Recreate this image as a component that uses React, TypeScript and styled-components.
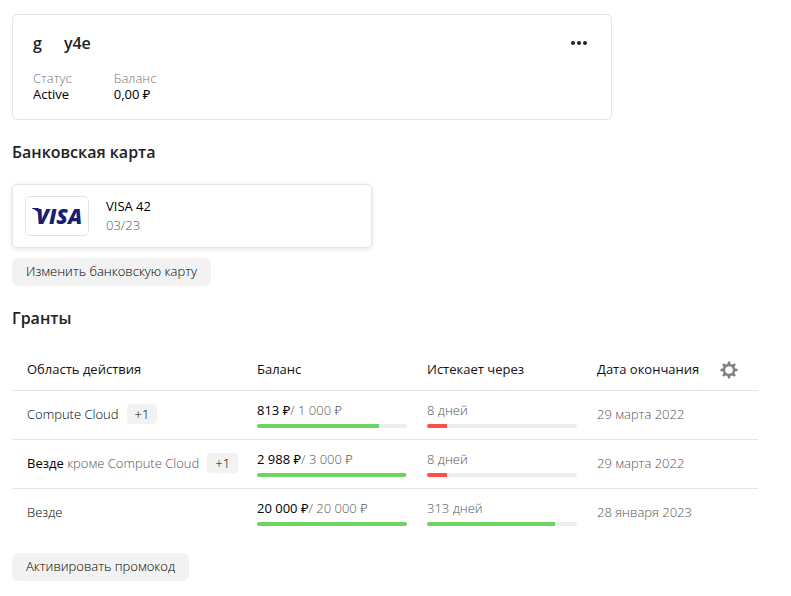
import React from 'react';
import styled, { createGlobalStyle } from 'styled-components';

const GlobalStyle = createGlobalStyle`
  * { box-sizing: border-box; }
  body {
    margin: 0;
    background: #fff;
    color: #000;
    font-family: "Open Sans", "Noto Sans", sans-serif;
    font-size: 13px;
    line-height: 16px;
    font-weight: 300;
  }
`;

const Page = styled.main`
  display: flex;
  flex-direction: column;
  align-items: flex-start;
  padding: 14px 12px;
`;

const AccountCard = styled.section`
  width: 100%;
  max-width: 600px;
  padding: 17px 20px;
  border: 1px solid #e5e5e5;
  border-radius: 5px;
`;

const AccountHeader = styled.header`
  display: flex;
  align-items: center;
  justify-content: space-between;
`;

const AccountName = styled.h1`
  display: flex;
  gap: 22px;
  margin: 0;
  font-size: 16px;
  line-height: 22px;
  font-weight: 600;
  color: #222;
`;

const IconButton = styled.button`
  display: flex;
  align-items: center;
  justify-content: center;
  width: 24px;
  height: 20px;
  padding: 0;
  border: 0;
  background: none;
  color: #808080;
  cursor: pointer;
`;

const Facts = styled.dl`
  display: flex;
  gap: 42px;
  margin: 16px 0 0;
`;

const Fact = styled.div`
  dt { color: #777; }
  dd { margin: 0; font-weight: 400; }
`;

const SectionTitle = styled.h2`
  margin: 0;
  padding: 21px 0;
  font-size: 16px;
  line-height: 22px;
  font-weight: 600;
  color: #222;
`;

const BankCard = styled.div`
  display: flex;
  align-items: center;
  gap: 17px;
  width: 100%;
  max-width: 360px;
  height: 64px;
  padding: 0 12px;
  border: 1px solid #e5e5e5;
  border-radius: 5px;
  box-shadow: 0 1px 5px rgba(0, 0, 0, 0.12);
`;

const Brand = styled.div`
  display: flex;
  align-items: center;
  justify-content: center;
  width: 64px;
  height: 40px;
  border: 1px solid #e5e5e5;
  border-radius: 5px;
`;

const CardText = styled.div`
  line-height: 19px;
`;

const Muted = styled.span`
  color: #555;
  font-weight: 300;
`;

const Strong = styled.span`
  font-weight: 400;
`;

const Button = styled.button`
  height: 28px;
  padding: 0 14px 2px;
  border: 0;
  border-radius: 6px;
  background: #f2f2f2;
  color: #000;
  font: inherit;
  white-space: nowrap;
  cursor: pointer;
`;

const CardActions = styled.div`
  margin-top: 10px;
`;

const Grants = styled.table`
  width: 100%;
  max-width: 746px;
  margin-bottom: 16px;
  border-collapse: collapse;
  table-layout: fixed;

  th, td {
    height: 49px;
    padding: 0 5px 1px 15px;
    text-align: left;
    white-space: nowrap;
  }
  th { height: 40px; padding-bottom: 2px; font-weight: 400; color: #111; }
  th:last-child { padding-bottom: 0; }
  tbody tr { border-top: 1px solid #e5e5e5; }
`;

const MeterCell = styled.td`
  && { padding: 1px 5px 0 15px; }
`;

const Col = styled.col<{ $w?: number }>`
  width: ${(p) => (p.$w ? `${p.$w}px` : 'auto')};
`;

const Scope = styled.div`
  display: flex;
  align-items: center;
  gap: 8px;
`;

const Badge = styled.span`
  padding: 2px 8px;
  border-radius: 4px;
  background: #f2f2f2;
`;

const Meter = styled.div`
  height: 4px;
  margin-top: 6px;
  border-radius: 2px;
  background: #ebeef0;
  overflow: hidden;
`;

const Fill = styled.div<{ $tone: 'good' | 'bad' }>`
  height: 100%;
  background: ${(p) => (p.$tone === 'good' ? '#6bd55f' : '#ff4d47')};
`;

type Grant = {
  scope: string;
  except?: string;
  more?: string;
  left: string;
  total: string;
  balance: number;
  days: string;
  time: number;
  tone: 'good' | 'bad';
  end: string;
};

const grants: Grant[] = [
  { scope: 'Compute Cloud', more: '+1', left: '813 ₽', total: '1 000 ₽', balance: 81.3, days: '8 дней', time: 13, tone: 'bad', end: '29 марта 2022' },
  { scope: 'Везде', except: 'кроме Compute Cloud', more: '+1', left: '2 988 ₽', total: '3 000 ₽', balance: 99.6, days: '8 дней', time: 13, tone: 'bad', end: '29 марта 2022' },
  { scope: 'Везде', left: '20 000 ₽', total: '20 000 ₽', balance: 100, days: '313 дней', time: 85.6, tone: 'good', end: '28 января 2023' },
];

const DotsIcon = () => (
  <svg width="18" height="4" viewBox="0 0 18 4" fill="#222" aria-hidden="true">
    <circle cx="3" cy="2" r="2" />
    <circle cx="9" cy="2" r="2" />
    <circle cx="15" cy="2" r="2" />
  </svg>
);

const GearIcon = () => (
  <svg width="18" height="18" viewBox="-9 -9 18 18" fill="currentColor" aria-hidden="true">
    <circle r="5" fill="none" stroke="currentColor" strokeWidth="2.4" />
    {[0, 45, 90, 135, 180, 225, 270, 315].map((a) => (
      <path key={a} d="M-1.7 -5.4 L-1 -8.6 H1 L1.7 -5.4 Z" transform={`rotate(${a})`} />
    ))}
  </svg>
);

const VisaLogo = () => (
  <svg width="52" height="30" viewBox="0 0 52 30" fill="#1a1f71" role="img" aria-label="VISA">
    <path d="M1 7 H6.5 Q8.6 7 9 9 L10.5 16 Q7 9.5 1 7.6 Z" />
    <text x="5" y="23" fontFamily="Open Sans" fontSize="21" fontWeight="800" fontStyle="italic">VISA</text>
  </svg>
);

export default function App() {
  return (
    <>
      <GlobalStyle />
      <Page>
        <AccountCard>
          <AccountHeader>
            <AccountName><span>g</span><span>y4e</span></AccountName>
            <IconButton aria-label="Меню"><DotsIcon /></IconButton>
          </AccountHeader>
          <Facts>
            <Fact><dt>Статус</dt><dd>Active</dd></Fact>
            <Fact><dt>Баланс</dt><dd>0,00 ₽</dd></Fact>
          </Facts>
        </AccountCard>

        <SectionTitle>Банковская карта</SectionTitle>
        <BankCard>
          <Brand><VisaLogo /></Brand>
          <CardText>
            <Strong>VISA 42</Strong>
            <br />
            <Muted>03/23</Muted>
          </CardText>
        </BankCard>
        <CardActions><Button>Изменить банковскую карту</Button></CardActions>

        <SectionTitle>Гранты</SectionTitle>
        <Grants>
          <colgroup>
            <Col $w={230} />
            <Col $w={170} />
            <Col $w={170} />
            <Col $w={120} />
            <Col />
          </colgroup>
          <thead>
            <tr>
              <th>Область действия</th>
              <th>Баланс</th>
              <th>Истекает через</th>
              <th>Дата окончания</th>
              <th><IconButton aria-label="Настройки"><GearIcon /></IconButton></th>
            </tr>
          </thead>
          <tbody>
            {grants.map((g, i) => (
              <tr key={i}>
                <td>
                  <Scope>
                    {g.except ? (
                      <span><Strong>{g.scope}</Strong> <Muted>{g.except}</Muted></span>
                    ) : (
                      <span>{g.scope}</span>
                    )}
                    {g.more && <Badge>{g.more}</Badge>}
                  </Scope>
                </td>
                <MeterCell>
                  <Strong>{g.left}</Strong><Muted>/ {g.total}</Muted>
                  <Meter><Fill $tone="good" style={{ width: `${g.balance}%` }} /></Meter>
                </MeterCell>
                <MeterCell>
                  <Muted>{g.days}</Muted>
                  <Meter><Fill $tone={g.tone} style={{ width: `${g.time}%` }} /></Meter>
                </MeterCell>
                <td colSpan={2}><Muted>{g.end}</Muted></td>
              </tr>
            ))}
          </tbody>
        </Grants>
        <Button>Активировать промокод</Button>
      </Page>
    </>
  );
}
